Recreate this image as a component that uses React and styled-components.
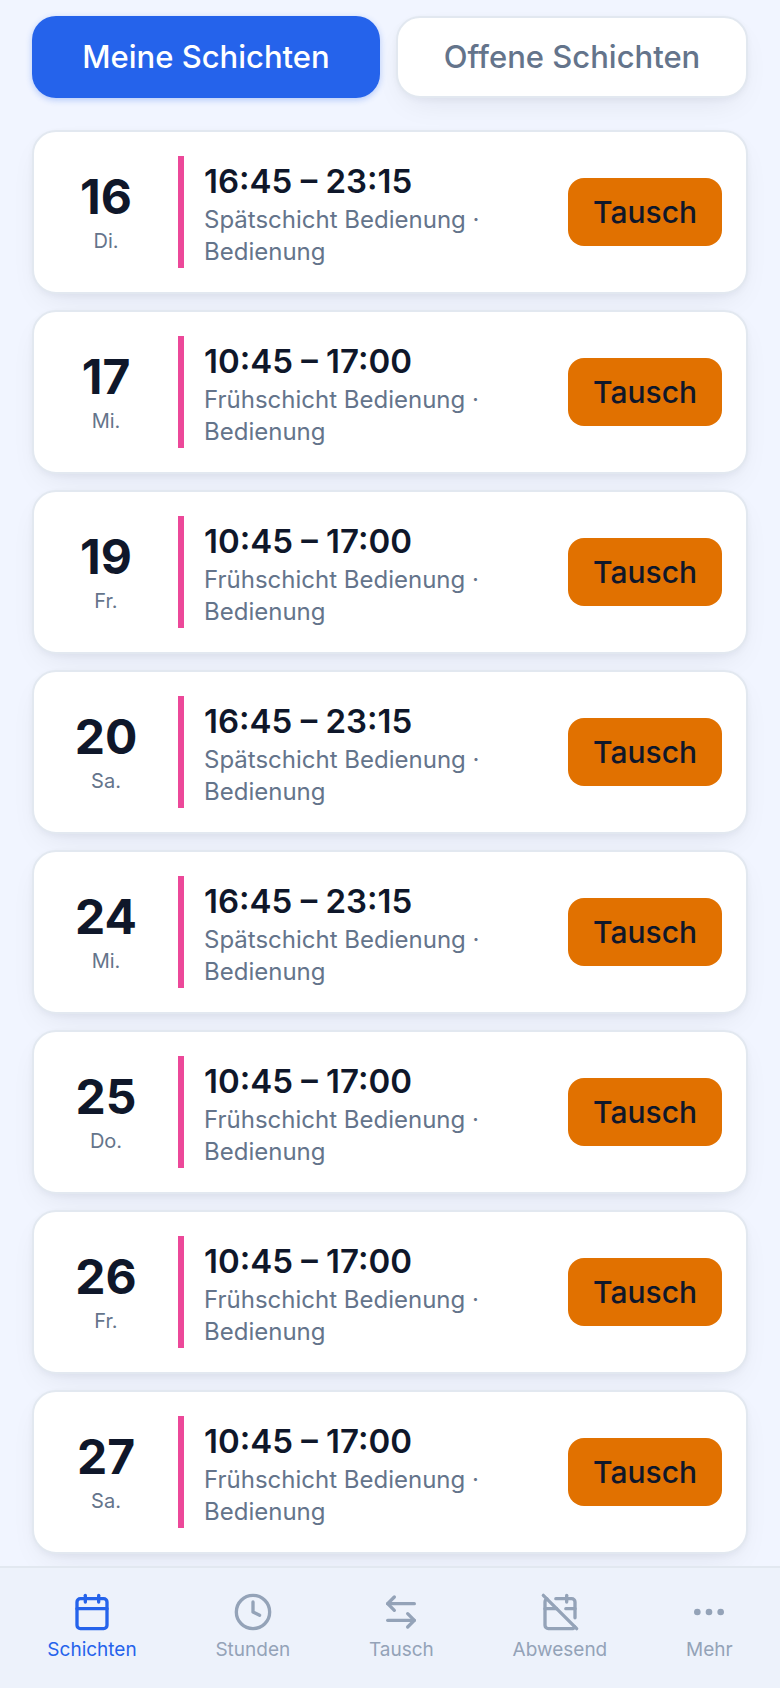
import React, { useState } from "react";
import styled, { createGlobalStyle } from "styled-components";
import {
  ArrowLeftRight,
  Calendar,
  CalendarOff,
  Clock,
  Ellipsis,
} from "lucide-react";

const GlobalStyle = createGlobalStyle`
  * {
    box-sizing: border-box;
  }

  body {
    margin: 0;
    background: #f1f5ff;
    color: #0f172a;
    font-family: Inter, "Liberation Sans", sans-serif;
    -webkit-font-smoothing: antialiased;
  }

  button {
    font-family: inherit;
    cursor: pointer;
  }
`;

const cardShadow =
  "0 2px 6px rgba(15, 23, 42, 0.04), 0 12px 32px -12px rgba(15, 23, 42, 0.1)";

const Page = styled.main`
  min-height: 100vh;
  padding: 16px 32px 134px;
`;

const Tabs = styled.div`
  display: flex;
  gap: 16px;
  margin-bottom: 32px;
`;

const Tab = styled.button`
  flex: 1 1 0;
  padding: 16px;
  border: ${p => (p.$active ? "0" : "2px solid #e2e8f0")};
  border-radius: 24px;
  background: ${p => (p.$active ? "#2563eb" : "#fff")};
  color: ${p => (p.$active ? "#fff" : "#64748b")};
  font-size: 31px;
  font-weight: 500;
  line-height: 46px;
  box-shadow: ${p =>
    p.$active ? "0 2px 6px rgba(37, 99, 235, 0.3)" : cardShadow};
`;

const ShiftList = styled.ul`
  display: flex;
  flex-direction: column;
  gap: 16px;
  margin: 0;
  padding: 0;
  list-style: none;
`;

const ShiftCard = styled.li`
  display: flex;
  align-items: center;
  gap: 24px;
  padding: 24px;
  border: 2px solid #e2e8f0;
  border-radius: 24px;
  background: #fff;
  box-shadow: ${cardShadow};
`;

const DateColumn = styled.div`
  display: flex;
  flex-direction: column;
  flex: none;
  gap: 2px;
  width: 96px;
  text-align: center;
`;

const Day = styled.span`
  font-size: 48px;
  font-weight: 700;
  line-height: 56px;
`;

const Weekday = styled.span`
  color: #64748b;
  font-size: 20px;
  line-height: 28px;
`;

const Details = styled.div`
  flex: 1;
  min-width: 0;
  padding: 2px 0 0 20px;
  border-left: 6px solid #ec4899;
`;

const Time = styled.div`
  font-size: 33px;
  font-weight: 600;
  line-height: 46px;
`;

const Description = styled.div`
  color: #64748b;
  font-size: 24px;
  line-height: 32px;
`;

const SwapButton = styled.button`
  flex: none;
  min-width: 154px;
  padding: 12px 24px;
  border: 0;
  border-radius: 16px;
  background: #e17100;
  color: #0f172a;
  font-size: 30px;
  font-weight: 500;
  line-height: 44px;
`;

const BottomNav = styled.nav`
  position: fixed;
  right: 0;
  bottom: 0;
  left: 0;
  display: flex;
  justify-content: space-around;
  padding: 24px 8px;
  border-top: 2px solid #e2e8f0;
  background: #edf2fb;
`;

const NavLink = styled.a`
  display: flex;
  flex-direction: column;
  align-items: center;
  gap: 4px;
  color: ${p => (p.$active ? "#2563eb" : "#94a3b8")};
  font-size: 19px;
  line-height: 28px;
  text-decoration: none;
`;

const EARLY = { time: "10:45 – 17:00", name: "Frühschicht Bedienung" };
const LATE = { time: "16:45 – 23:15", name: "Spätschicht Bedienung" };

const shifts = [
  { day: 16, weekday: "Di.", ...LATE },
  { day: 17, weekday: "Mi.", ...EARLY },
  { day: 19, weekday: "Fr.", ...EARLY },
  { day: 20, weekday: "Sa.", ...LATE },
  { day: 24, weekday: "Mi.", ...LATE },
  { day: 25, weekday: "Do.", ...EARLY },
  { day: 26, weekday: "Fr.", ...EARLY },
  { day: 27, weekday: "Sa.", ...EARLY },
];

const navItems = [
  { label: "Schichten", icon: Calendar },
  { label: "Stunden", icon: Clock },
  { label: "Tausch", icon: ArrowLeftRight },
  { label: "Abwesend", icon: CalendarOff },
  { label: "Mehr", icon: Ellipsis },
];

function Shift({ day, weekday, time, name }) {
  return (
    <ShiftCard>
      <DateColumn>
        <Day>{day}</Day>
        <Weekday>{weekday}</Weekday>
      </DateColumn>
      <Details>
        <Time>{time}</Time>
        <Description>{`${name} · Bedienung`}</Description>
      </Details>
      <SwapButton type="button">Tausch</SwapButton>
    </ShiftCard>
  );
}

function App() {
  const [tab, setTab] = useState("mine");
  return (
    <>
      <GlobalStyle />
      <Page>
        <Tabs>
          <Tab
            type="button"
            $active={tab === "mine"}
            onClick={() => setTab("mine")}
          >
            Meine Schichten
          </Tab>
          <Tab
            type="button"
            $active={tab === "open"}
            onClick={() => setTab("open")}
          >
            Offene Schichten
          </Tab>
        </Tabs>
        <ShiftList>
          {shifts.map(shift => (
            <Shift key={shift.day} {...shift} />
          ))}
        </ShiftList>
      </Page>
      <BottomNav>
        {navItems.map(({ label, icon: Icon }) => (
          <NavLink key={label} href="#" $active={label === "Schichten"}>
            <Icon size={40} aria-hidden="true" />
            {label}
          </NavLink>
        ))}
      </BottomNav>
    </>
  );
}

export default App;
